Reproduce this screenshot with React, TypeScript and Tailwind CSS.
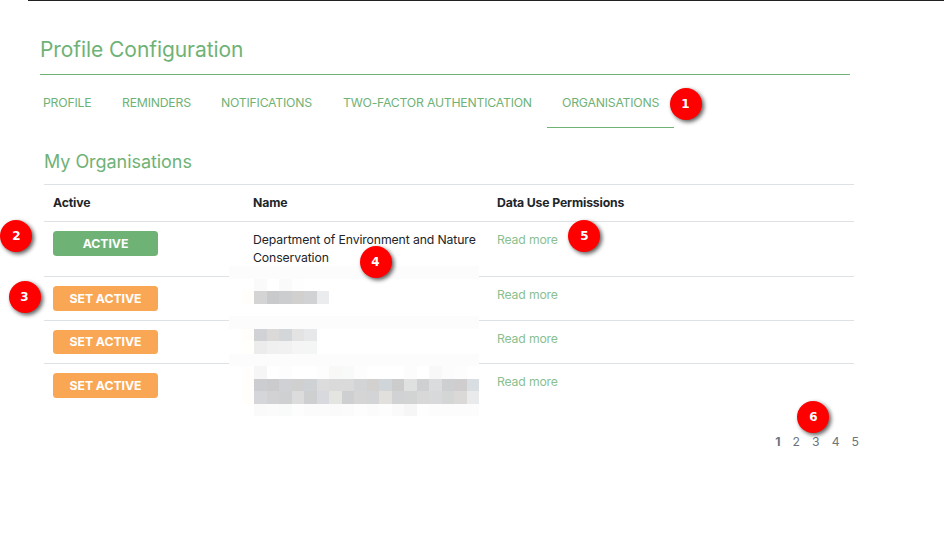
const tabs = [
  { label: 'PROFILE', box: 'w-[79px]' },
  { label: 'REMINDERS', box: 'w-[99px]' },
  { label: 'NOTIFICATIONS', box: 'w-[122px]' },
  { label: 'TWO-FACTOR AUTHENTICATION', box: 'w-[219px]' },
  { label: 'ORGANISATIONS', box: 'w-[127px]', current: true },
];

const rows = [
  { active: true, name: 'Department of Environment and Nature Conservation', height: 'h-[55px]', button: 'h-[25px]' },
  { active: false, name: '', height: 'h-[44px]', button: 'h-[25px]' },
  { active: false, name: '', height: 'h-[43px]', button: 'h-[24px]' },
  { active: false, name: '', height: 'h-[52px]', button: 'h-[25px]' },
];

const callouts = [
  { n: 1, place: 'left-[669.5px] top-[88.4px]' },
  { n: 2, place: 'left-[0.4px] top-[220.4px]' },
  { n: 3, place: 'left-[8.5px] top-[281.4px]' },
  { n: 4, place: 'left-[359.5px] top-[245.5px]' },
  { n: 5, place: 'left-[568.4px] top-[219.5px]' },
  { n: 6, place: 'left-[797.4px] top-[400.5px]' },
];

const W = '#ffffff';
const B = '#fcfcfc';
const band = Array(20).fill(B);
const pad = (cells: string[]) => [...cells, ...Array(20 - cells.length).fill(W)];

// Pixelated cover over the hidden organisation names, 20 cells per line.
const mosaic: string[][] = [
  band,
  pad([W, W, '#fafafa', W, '#fafafa', '#fefefe']),
  pad([W, '#fffefa', '#d4d4d4', '#c9cacb', '#cccdce', '#d2d0ce', '#d1d2d3', '#ebecee']),
  pad([]),
  band,
  pad([W, '#fffefa', '#d0d2d6', '#dcdad8', '#d3d7da', '#e3e3e3', '#e7e8ea']),
  pad([W, '#fffffc', '#ececec', '#f0f0f0', '#f1f1f1', '#f5f5f5', '#f4f5f5']),
  band,
  [W, '#fffefc', '#f6f6f6', W, '#fdfdfd', W, W, '#fdfdfd', '#f8f8f7', '#f8faf9', '#fdfdfd', W, W, W, '#fcfcfc', W, '#f8f8f8', '#fcfcfc', '#fdfdfd', W],
  [W, '#fffefa', '#cccdd0', '#cbcbcd', '#d0d1d5', '#d0d0d0', '#ced2d5', '#dcdcdc', '#dadada', '#dadada', '#d3d4d6', '#d3d1cf', '#d0d5d9', '#cccccc', '#dfe1e0', '#cfd0d1', '#dbdcde', '#cecfd0', '#cfcdce', '#d9dee2'],
  [W, '#fffefa', '#d5d6d9', '#d2d2d4', '#cfd0d2', '#dcdcdc', '#cecfd1', '#d8d9de', '#e4e4e1', '#cecfd1', '#d5d5d6', '#d3d4d6', '#e2e0dd', '#d1d2d3', '#d2d4d3', '#d8d8d9', '#d8d9db', '#d4d6d5', '#dbd9d8', '#e8eaec'],
  [W, W, '#fafafa', '#fbfbfb', '#f9fbfb', '#fdfdfd', '#fbfbfb', '#fbfbfb', '#fafafa', '#fbfbfb', '#fdfdfd', '#fbfbfb', '#fdfdfd', '#fafafa', '#f6f6f6', '#fefefe', '#fcfcfc', '#fcfcfc', '#fcfcfc', '#fcfcfc'],
];

function Mosaic() {
  return (
    <div className="absolute left-[229px] top-[266px] grid h-[150px] w-[250px] grid-cols-[repeat(20,12.5px)] grid-rows-[repeat(12,12.5px)]">
      {mosaic.flat().map((color, i) => (
        <div key={i} style={{ backgroundColor: color }} />
      ))}
    </div>
  );
}

export default function App() {
  return (
    <div className="relative h-[541px] w-[944px] overflow-hidden bg-white font-['Inter',sans-serif] text-[12.25px] text-[#212529]">
      <div className="ml-7 h-px bg-[#212121]" />
      <main className="ml-10 w-[819px]">
        <h1 className="flex h-[74px] w-[810px] items-end border-b border-[#6fb276] pb-[9px] text-[21px] leading-[30px] tracking-[-0.07px] text-[#6fb276]">
          Profile Configuration
        </h1>
        <nav className="flex h-[53px] pl-[3px] tracking-[-0.22px] text-[#6fb276]">
          {tabs.map((t) =>
            t.current ? (
              <a key={t.label} className={`${t.box} -ml-[15px] border-b border-[#6fb276] pl-[15px] pt-[19px] leading-[18px]`}>
                {t.label}
              </a>
            ) : (
              <a key={t.label} className={`${t.box} shrink-0 whitespace-nowrap pt-[19px] leading-[18px]`}>
                {t.label}
              </a>
            ),
          )}
        </nav>
        <section className="ml-1 w-[810px]">
          <h2 className="h-14 pt-[22px] text-[18px] leading-6 tracking-[-0.05px] text-[#6fb276]">My Organisations</h2>
          <div className="grid h-[37px] grid-cols-[200px_244px_366px] border-t border-[#dee2e6] pt-[9px] font-bold leading-[18px] tracking-[-0.15px]">
            <div className="pl-[9px]">Active</div>
            <div className="pl-[9px]">Name</div>
            <div className="pl-[9px]">Data Use Permissions</div>
          </div>
          {rows.map((r, i) => (
            <div key={i} className={`${r.height} grid grid-cols-[200px_244px_366px] border-t border-[#dee2e6] pt-[9px] leading-[18px] tracking-[-0.12px]`}>
              <div className="pl-[9px]">
                <button
                  className={`${r.button} ${r.active ? 'bg-[#6fb276]' : 'bg-[#faa755]'} flex w-[105px] items-center justify-center rounded-[3.5px] font-bold tracking-[-0.05px] text-white`}
                >
                  {r.active ? 'ACTIVE' : 'SET ACTIVE'}
                </button>
              </div>
              <div className="pl-[9px]">{r.name}</div>
              <a className="pl-[9px] tracking-[-0.18px] text-[#8abf90]">Read more</a>
            </div>
          ))}
        </section>
        <div className="mt-[18px] flex justify-end gap-3 leading-[18px] text-[#6c757d]">
          <b>1</b>
          <span>2</span>
          <span>3</span>
          <span>4</span>
          <span>5</span>
        </div>
      </main>
      <Mosaic />
      {callouts.map((c) => (
        <div
          key={c.n}
          className={`${c.place} absolute flex size-8 items-center justify-center rounded-full bg-[#fe0000] font-['DejaVu_Sans',sans-serif] text-[12px] font-bold text-white shadow-[2px_2px_4px_rgba(0,0,0,0.65)]`}
        >
          {c.n}
        </div>
      ))}
    </div>
  );
}
